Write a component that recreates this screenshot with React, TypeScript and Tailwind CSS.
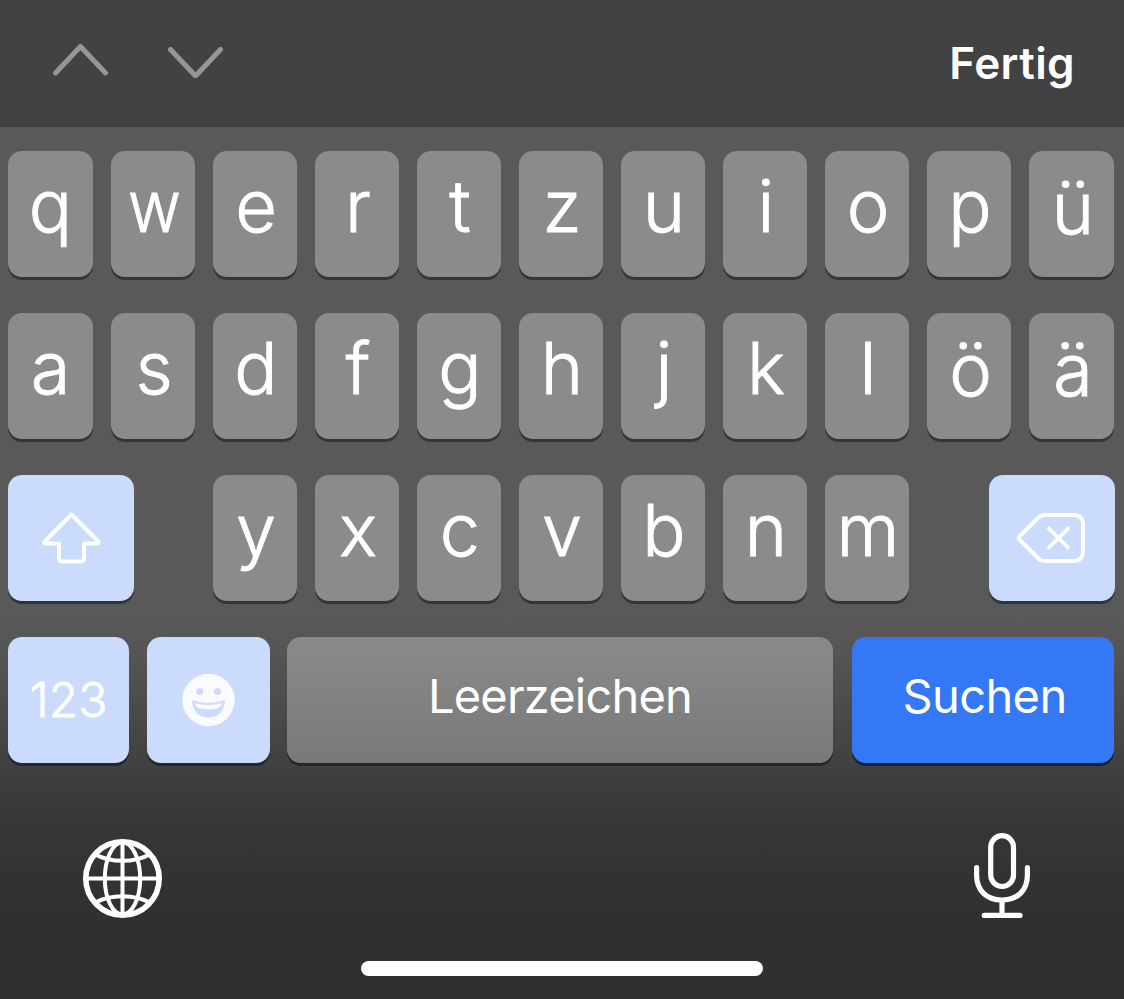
import React from 'react';
import clsx from 'clsx';

interface KeyProps {
  className?: string;
  children: React.ReactNode;
}

const topRow = ['q', 'w', 'e', 'r', 't', 'z', 'u', 'i', 'o', 'p', 'ü'];
const homeRow = ['a', 's', 'd', 'f', 'g', 'h', 'j', 'k', 'l', 'ö', 'ä'];
const bottomRow = ['y', 'x', 'c', 'v', 'b', 'n', 'm'];

const Key: React.FC<KeyProps> = ({ className, children }) => (
  <button
    type="button"
    className={clsx(
      'h-[126px] shrink-0 rounded-[14px] flex items-center justify-center leading-none text-white',
      className
    )}
  >
    {children}
  </button>
);

const LetterKey: React.FC<{ letter: string; wide?: boolean }> = ({ letter, wide }) => {
  const umlaut = 'üöä'.includes(letter);

  return (
    <Key
      className={clsx(
        'bg-[#8b8b8b] text-[72px] font-light [-webkit-text-stroke:0.9px_white] shadow-[0_3px_0_#353535]',
        wide ? 'w-[85px]' : 'w-[84px] pl-0.5',
        umlaut ? 'pb-3 pl-[3px]' : 'pb-4'
      )}
    >
      <span className={clsx(letter === 'w' && 'scale-x-90')}>{letter}</span>
    </Key>
  );
};

const LetterRow: React.FC<{ letters: string[] }> = ({ letters }) => (
  <div className="flex gap-[18px]">
    {letters.map((letter, index) => (
      <LetterKey key={letter} letter={letter} wide={index === 0 || index === letters.length - 1} />
    ))}
  </div>
);

const ShiftIcon = () => (
  <svg width="60" height="54" viewBox="0 0 60 54" fill="none" stroke="currentColor" strokeWidth="4" strokeLinejoin="round">
    <path d="M30.5 3.5 L57.3 30.5 Q58.3 32.5 56.5 32.5 H43 V47 Q43 50.5 39.5 50.5 H21.5 Q18 50.5 18 47 V32.5 H4.5 Q2.7 32.5 3.7 30.5 Z" />
  </svg>
);

const DeleteIcon = () => (
  <svg width="68" height="50" viewBox="0 0 68 50" fill="none" stroke="currentColor" strokeWidth="4" strokeLinecap="round" strokeLinejoin="round">
    <path d="M27 2 H56 Q66 2 66 12 V38 Q66 48 56 48 H27 Q24 48 21.5 45.5 L2.8 27 Q1.2 25 2.8 23 L21.5 4.5 Q24 2 27 2 Z" />
    <path d="M32 15.5 L51 34.5 M51 15.5 L32 34.5" strokeWidth="3.8" />
  </svg>
);

const SmileyIcon = () => (
  <svg width="53" height="53" viewBox="0 0 53 53">
    <circle cx="26.5" cy="26" r="26.2" fill="#f9fbff" />
    <circle cx="17.7" cy="17.5" r="3.5" fill="#cbdbfc" />
    <circle cx="35.5" cy="17.5" r="3.5" fill="#cbdbfc" />
    <path d="M10 28.5 Q9.5 25.8 12 26.5 Q26.5 31.5 41 26.5 Q43.5 25.8 43 28.5 C41.5 38 35.5 43.5 26.5 43.5 C17.5 43.5 11.5 38 10 28.5 Z" fill="#cbdbfc" />
    <path d="M12.5 29 Q26.5 33 40.5 29 Q39 35.5 26.5 35.5 Q14 35.5 12.5 29 Z" fill="#f9fbff" />
  </svg>
);

const GlobeIcon = () => (
  <svg width="80" height="80" viewBox="-0.5 -0.5 80 80" fill="none" stroke="currentColor" strokeWidth="4">
    <circle cx="40" cy="40" r="36.7" strokeWidth="5.6" />
    <ellipse cx="40" cy="40" rx="17.7" ry="36" />
    <path d="M40 4 V76 M4 40 H76" />
    <path d="M13 16 Q24 22.3 40 22.3 Q56 22.3 67 16" />
    <path d="M13 64 Q24 57.7 40 57.7 Q56 57.7 67 64" />
  </svg>
);

const MicIcon = () => (
  <svg width="56" height="86" viewBox="0 0 56 86" fill="none" stroke="currentColor" strokeWidth="5.2" strokeLinecap="round">
    <rect x="16.7" y="2.7" width="22.8" height="50.8" rx="11.4" />
    <path d="M2.6 34.5 V42 C2.6 57 12 67 28 67 C44 67 53.4 57 53.4 42 V34.5" />
    <path d="M28 67.5 V82 M10.3 82.4 H46" />
  </svg>
);

const App: React.FC = () => {
  return (
    <div className="w-[1124px] h-[999px] overflow-hidden flex flex-col bg-[#303030] font-['Inter','Liberation_Sans',sans-serif] text-white">
      {/* Input accessory bar */}
      <div className="h-[127px] shrink-0 bg-[#424242] flex items-center justify-between pl-[52px] pr-[49px]">
        <div className="flex gap-[58px] pb-[7px] text-[#969696]">
          <svg width="57" height="36" viewBox="0 0 57 36" fill="none" stroke="currentColor" strokeWidth="5" strokeLinecap="round" strokeLinejoin="round">
            <path d="M3.5 31 L28.5 4.5 L53.5 31" />
          </svg>
          <svg width="57" height="36" viewBox="0 0 57 36" fill="none" stroke="currentColor" strokeWidth="5" strokeLinecap="round" strokeLinejoin="round">
            <path d="M3.5 7.5 L28.5 34 L53.5 7.5" />
          </svg>
        </div>
        <span className="pb-0.5 text-[44px] leading-none font-semibold tracking-[0.4px]">Fertig</span>
      </div>

      {/* Keys */}
      <div className="grow flex flex-col bg-[linear-gradient(#595959_0px,#595959_485px,#555555_525px,#4b4b4b_580px,#404041_640px,#373738_695px,#323233_750px,#303030_810px)]">
        <div className="flex flex-col gap-9 pt-6 pl-2">
          <LetterRow letters={topRow} />
          <LetterRow letters={homeRow} />

          <div className="flex">
            <Key className="w-[126px] mr-[79px] bg-[#cbdbfc] shadow-[0_3px_0_#2f333b]">
              <ShiftIcon />
            </Key>
            <div className="flex gap-[18px]">
              {bottomRow.map((letter) => (
                <LetterKey key={letter} letter={letter} />
              ))}
            </div>
            <Key className="w-[126px] ml-20 pr-0.5 bg-[#cbdbfc] shadow-[0_3px_0_#2f333b]">
              <DeleteIcon />
            </Key>
          </div>

          <div className="flex">
            <Key className="w-[121px] mr-[18px] bg-[#cbdbfc] text-[48px] font-light [-webkit-text-stroke:0.8px_white] shadow-[0_3px_0_#23262e]">
              123
            </Key>
            <Key className="w-[123px] mr-[17px] bg-[#cbdbfc] shadow-[0_3px_0_#23262e]">
              <SmileyIcon />
            </Key>
            <Key className="w-[546px] mr-[19px] pb-[10px] bg-linear-to-b from-[#8a8a8a] to-[#79797b] text-[47px] tracking-[-0.8px] shadow-[0_3px_0_#272728]">
              Leerzeichen
            </Key>
            <Key className="w-[262px] pb-[10px] pl-[3px] bg-[#3478f6] text-[47px] tracking-[-0.6px] shadow-[0_3px_0_#1b2130]">
              Suchen
            </Key>
          </div>
        </div>

        {/* Globe, dictation and home indicator */}
        <div className="flex justify-between items-end h-[86px] mt-[70px] pl-[82px] pr-[94px]">
          <div className="pb-px">
            <GlobeIcon />
          </div>
          <MicIcon />
        </div>
        <div className="w-[402px] h-[15px] mt-[42px] mx-auto rounded-full bg-white" />
      </div>
    </div>
  );
};

export default App;
